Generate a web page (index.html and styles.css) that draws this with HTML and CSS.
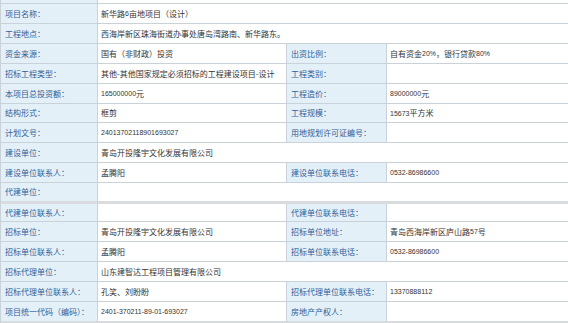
FILE: index.html
```html
<!DOCTYPE html>
<html lang="zh-CN">
<head>
<meta charset="utf-8">
<title>项目信息</title>
<link rel="stylesheet" href="styles.css">
</head>
<body>
<div class="grid">
  <div class="c l"></div><div class="c v s3"></div>

  <div class="c l">项目名称：</div><div class="c v s3">新华路<span class="n">6</span>亩地项目（设计）</div>

  <div class="c l">工程地点：</div><div class="c v s3">西海岸新区珠海街道办事处唐岛湾路南、新华路东。</div>

  <div class="c l">资金来源：</div><div class="c v">国有（非财政）投资</div>
  <div class="c l">出资比例：</div><div class="c v e">自有资金<span class="n">20%</span>，银行贷款<span class="n">80%</span></div>

  <div class="c l">招标工程类型：</div><div class="c v">其他-其他国家规定必须招标的工程建设项目-设计</div>
  <div class="c l">工程类别：</div><div class="c v e"></div>

  <div class="c l">本项目总投资额：</div><div class="c v"><span class="n">165000000</span>元</div>
  <div class="c l">工程造价：</div><div class="c v e"><span class="n">89000000</span>元</div>

  <div class="c l">结构形式：</div><div class="c v">框剪</div>
  <div class="c l">工程规模：</div><div class="c v e"><span class="n">15673</span>平方米</div>

  <div class="c l">计划文号：</div><div class="c v"><span class="n">24013702118901693027</span></div>
  <div class="c l">用地规划许可证编号：</div><div class="c v e"></div>

  <div class="c l">建设单位：</div><div class="c v s3">青岛开投隆宇文化发展有限公司</div>

  <div class="c l">建设单位联系人：</div><div class="c v">孟腾阳</div>
  <div class="c l">建设单位联系电话：</div><div class="c v e"><span class="n">0532-86986600</span></div>

  <div class="c l band">代建单位：</div><div class="c v s3 band"></div>

  <div class="c l">代建单位联系人：</div><div class="c v"></div>
  <div class="c l">代建单位联系电话：</div><div class="c v e"></div>

  <div class="c l">招标单位：</div><div class="c v">青岛开投隆宇文化发展有限公司</div>
  <div class="c l">招标单位地址：</div><div class="c v e">青岛西海岸新区庐山路<span class="n">57</span>号</div>

  <div class="c l">招标单位联系人：</div><div class="c v">孟腾阳</div>
  <div class="c l">招标单位联系电话：</div><div class="c v e"><span class="n">0532-86986600</span></div>

  <div class="c l">招标代理单位：</div><div class="c v s3">山东建智达工程项目管理有限公司</div>

  <div class="c l">招标代理单位联系人：</div><div class="c v">孔笑、刘盼盼</div>
  <div class="c l">招标代理单位联系电话：</div><div class="c v e"><span class="n">13370888112</span></div>

  <div class="c l band">项目统一代码（编码）：</div><div class="c v band"><span class="n">2401-370211-89-01-693027</span></div>
  <div class="c l band">房地产产权人：</div><div class="c v e band"></div>
</div>
</body>
</html>
```

FILE: styles.css
```css
html, body {
  margin: 0;
  padding: 0;
  background: #ffffff;
  overflow: hidden;
}

.grid {
  display: grid;
  width: 568px;
  box-sizing: border-box;
  border-left: 1px solid #c9d1d9;
  grid-template-columns: 97px 189px 100px 1fr;
  grid-template-rows: 4px repeat(5, 20px) 19px repeat(3, 20px) 21px 18px repeat(4, 20px) 22px;
  font-family: "Noto Sans CJK SC", "Noto Sans", sans-serif;
  font-size: 8px;
}

.c {
  box-sizing: border-box;
  border-right: 1px solid #c9d1d9;
  border-bottom: 1px solid #c9d1d9;
  display: flex;
  align-items: center;
  padding: 0 0 0 4px;
  white-space: nowrap;
  overflow: hidden;
  line-height: 1;
}

.l {
  background: #e4f0f8;
  color: #2e6098;
}

.v {
  background: #ffffff;
  color: #333333;
  padding-left: 3px;
}

.s3 {
  grid-column: span 3;
  border-right: none;
}

.e {
  border-right: none;
}

.band {
  border-bottom: 3px solid #d9dcdf;
}

.n {
  font-family: "Liberation Sans", Arial, sans-serif;
  font-size: 7px;
}
```
